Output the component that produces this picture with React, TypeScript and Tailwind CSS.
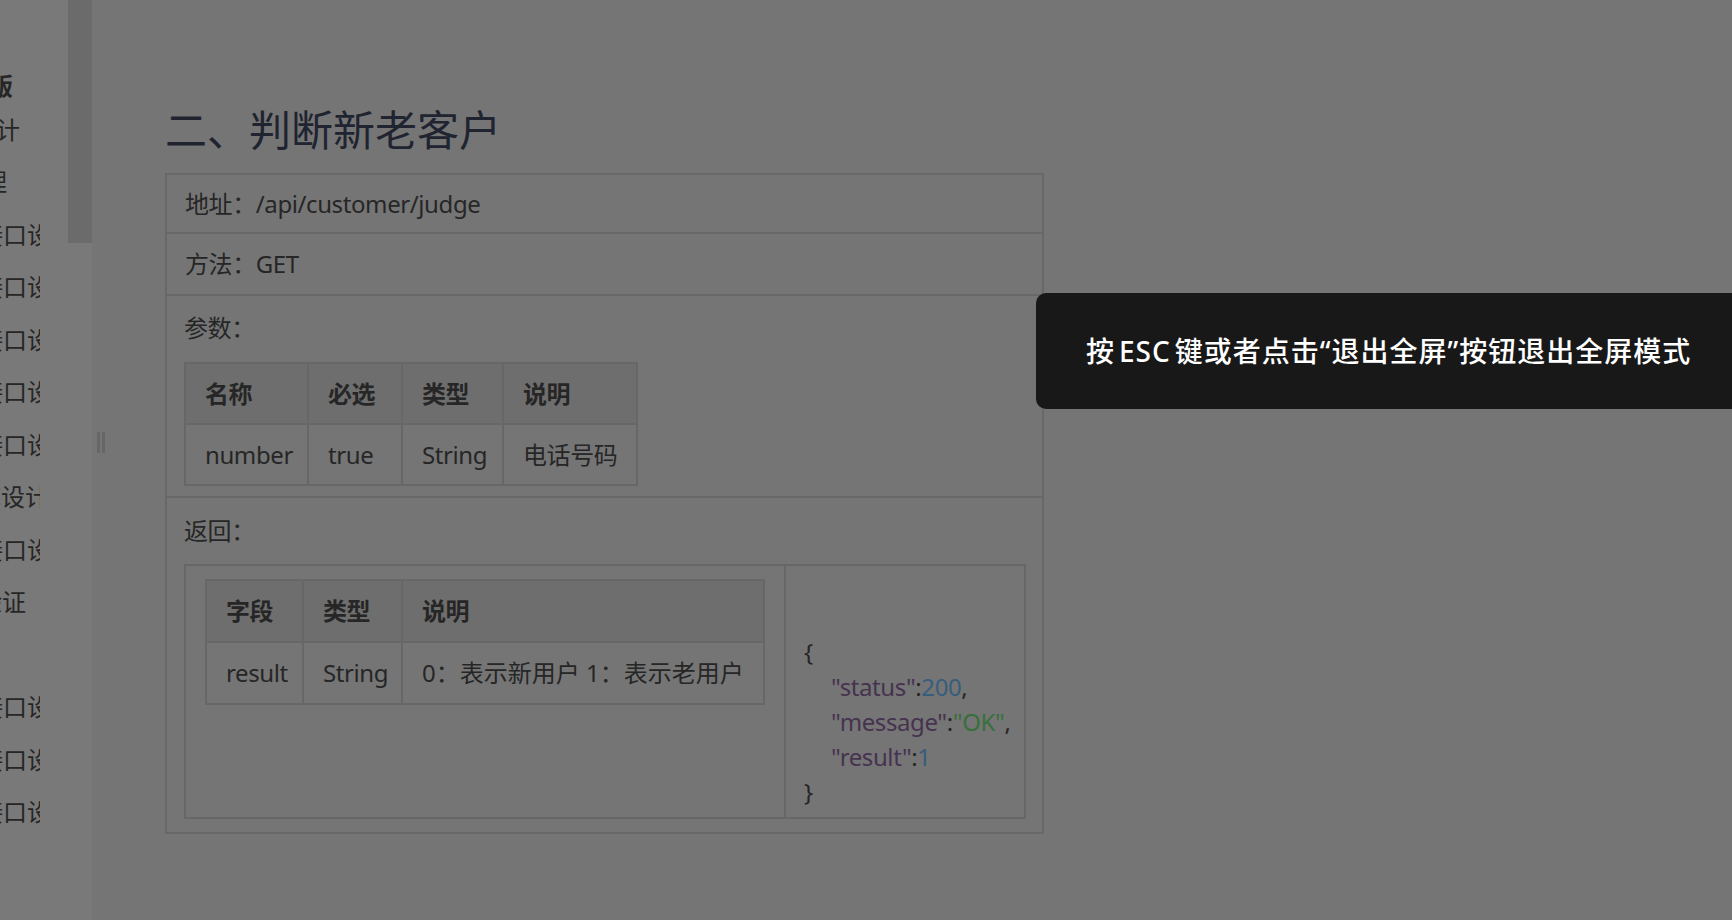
import React from "react";

const font = { fontFamily: '"Noto Sans", "Noto Sans CJK SC", sans-serif' };

const navItems = [
  { text: "接口文档版", cls: "h-[44px] ml-[-107px] font-bold" },
  { text: "数据库设计", cls: "h-[44px] ml-[-100px]" },
  { text: "用户管理", cls: "h-[52.5px] ml-[-89px] mt-[4px]" },
  { text: "登录接口设计", cls: "h-[52.5px] ml-[-69px]" },
  { text: "注册接口设计", cls: "h-[52.5px] ml-[-69px]" },
  { text: "客户接口设计", cls: "h-[52.5px] ml-[-69px]" },
  { text: "订单接口设计", cls: "h-[52.5px] ml-[-69px]" },
  { text: "商品接口设计", cls: "h-[52.5px] ml-[-69px]" },
  { text: "数据库设计", cls: "h-[52.5px] ml-[-71px]" },
  { text: "支付接口设计", cls: "h-[52.5px] ml-[-69px]" },
  { text: "身份验证", cls: "h-[52.5px] ml-[-70px]" },
  { text: "", cls: "h-[52.5px]" },
  { text: "地址接口设计", cls: "h-[52.5px] ml-[-69px]" },
  { text: "评价接口设计", cls: "h-[52.5px] ml-[-69px]" },
  { text: "消息接口设计", cls: "h-[52.5px] ml-[-69px]" },
];

const Sidebar: React.FC = () => {
  return (
    <div className="flex h-full w-[92px] shrink-0 bg-[#797979]">
      <div className="w-[40px] overflow-hidden pt-[64px]">
        {navItems.map((item, index) => (
          <div
            key={index}
            className={`flex items-center whitespace-nowrap text-[24px] text-[#262626] ${item.cls}`}
          >
            {item.text}
          </div>
        ))}
      </div>
      <div className="w-[28px]" />
      <div className="w-[24px]">
        <div className="h-[243px] w-full bg-[#6b6b6b]" />
      </div>
    </div>
  );
};

const cell = "border-2 border-[#676767] pl-[19px] text-left align-middle";

const App: React.FC = () => {
  return (
    <div
      className="relative flex h-[920px] w-full overflow-hidden bg-[#757575] text-[#262626]"
      style={font}
    >
      <Sidebar />

      {/* drag handle */}
      <div className="flex h-full w-[73px] shrink-0 items-start pt-[432px] pl-[5px]">
        <div className="flex h-[21px] gap-[2px]">
          <div className="w-[3px] bg-[#666666]" />
          <div className="w-[3px] bg-[#666666]" />
        </div>
      </div>

      <div className="flex flex-col pt-[109px] tracking-[-0.4px]">
        <h2 className="text-[42px] leading-[42px] tracking-normal text-[#1f2430]">二、判断新老客户</h2>

        <div className="mt-[22px] w-[879px] border-2 border-[#686868] text-[24px]">
          <div className="flex h-[59px] items-center border-b-2 border-[#686868] px-[18px]">
            地址：/api/customer/judge
          </div>
          <div className="flex h-[62px] items-center border-b-2 border-[#686868] px-[18px]">
            方法：GET
          </div>

          <div className="h-[202px] border-b-2 border-[#686868] pl-[17px] pt-[16px]">
            <div className="leading-[32px]">参数：</div>
            <table className="mt-[18px] border-collapse border-2 border-[#676767]">
              <thead>
                <tr className="h-[61px] bg-[#6e6e6e] font-bold">
                  <th className={`${cell} w-[123px]`}>名称</th>
                  <th className={`${cell} w-[94px]`}>必选</th>
                  <th className={`${cell} w-[101px]`}>类型</th>
                  <th className={`${cell} w-[134px]`}>说明</th>
                </tr>
              </thead>
              <tbody>
                <tr className="h-[61px]">
                  <td className={cell}>number</td>
                  <td className={cell}>true</td>
                  <td className={cell}>String</td>
                  <td className={cell}>电话号码</td>
                </tr>
              </tbody>
            </table>
          </div>

          <div className="h-[334px] pl-[17px] pt-[17px]">
            <div className="leading-[32px]">返回：</div>
            <table className="mt-[17px] h-[255px] border-collapse border-2 border-[#676767]">
              <tbody>
                <tr>
                  <td className="w-[600px] border-2 border-[#676767] px-[19px] pt-[13px] align-top">
                    <table className="w-[560px] border-collapse border-2 border-[#676767]">
                      <thead>
                        <tr className="h-[62px] bg-[#6e6e6e] font-bold">
                          <th className={`${cell} w-[97px]`}>字段</th>
                          <th className={`${cell} w-[99px]`}>类型</th>
                          <th className={cell}>说明</th>
                        </tr>
                      </thead>
                      <tbody>
                        <tr className="h-[62px]">
                          <td className={cell}>result</td>
                          <td className={cell}>String</td>
                          <td className={`${cell} tracking-normal`}>0：表示新用户 1：表示老用户</td>
                        </tr>
                      </tbody>
                    </table>
                  </td>
                  <td className="w-[240px] border-2 border-[#676767] pl-[18px] pt-[68px] align-top leading-[35px]">
                    <div>{"{"}</div>
                    <div className="pl-[27px]">
                      <span className="text-[#463350]">"status"</span>:
                      <span className="text-[#365e7c]">200</span>,
                    </div>
                    <div className="pl-[27px]">
                      <span className="text-[#463350]">"message"</span>:
                      <span className="text-[#37703b]">"OK"</span>,
                    </div>
                    <div className="pl-[27px]">
                      <span className="text-[#463350]">"result"</span>:
                      <span className="text-[#365e7c]">1</span>
                    </div>
                    <div>{"}"}</div>
                  </td>
                </tr>
              </tbody>
            </table>
          </div>
        </div>
      </div>

      {/* fullscreen toast */}
      <div className="absolute right-0 top-[293px] left-[1036px] flex h-[116px] items-center rounded-l-[10px] bg-[#181818] pl-[50px]">
        <span className="text-[28px] font-medium tracking-[1px] text-white">
          按<span className="mx-[4px]">ESC</span>键或者点击“退出全屏”按钮退出全屏模式
        </span>
      </div>
    </div>
  );
};

export default App;
